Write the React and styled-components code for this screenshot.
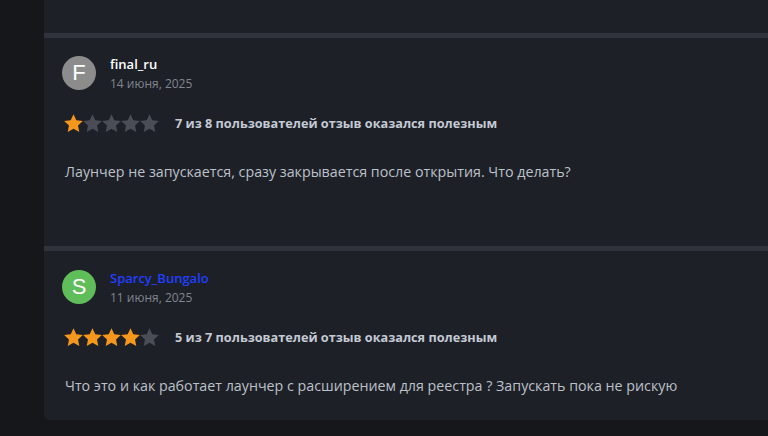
import React from 'react';
import styled, { createGlobalStyle } from 'styled-components';

const GlobalStyle = createGlobalStyle`
  html, body {
    margin: 0;
    padding: 0;
    background: #16171b;
    overflow: hidden;
  }
  body {
    font-family: "Open Sans", "Noto Sans", Arial, sans-serif;
  }
`;

const Page = styled.div`
  display: flex;
  height: 436px;
  padding-left: 44px;
  box-sizing: border-box;
`;

const Card = styled.div`
  flex: 1;
  margin-right: -20px;
  align-self: flex-start;
  background: #1e2027;
  border-radius: 0 0 6px 6px;
  padding-top: 33px;
  height: 420px;
  box-sizing: border-box;
`;

const Divider = styled.div`
  height: 5px;
  background: #30333c;
`;

const Review = styled.div`
  padding: ${p => p.$top}px 20px ${p => p.$bottom}px 18px;
`;

const Header = styled.div`
  display: flex;
  align-items: center;
  gap: 14px;
  height: 34px;
`;

const Avatar = styled.div`
  width: 34px;
  height: 34px;
  border-radius: 50%;
  background: ${p => p.$color};
  color: #fff;
  display: flex;
  align-items: center;
  justify-content: center;
  font-size: 22px;
  font-family: "Liberation Sans", Arial, sans-serif;
`;

const Meta = styled.div`
  display: flex;
  flex-direction: column;
  gap: 3px;
  margin-top: 1px;
`;

const Name = styled.span`
  font-size: 13px;
  font-weight: 600;
  line-height: 17px;
  color: ${p => p.$color};
`;

const Date = styled.span`
  font-size: 12px;
  line-height: 16px;
  color: #7f868f;
`;

const Rating = styled.div`
  display: flex;
  align-items: center;
  gap: 16px;
  margin-top: 23px;
  margin-left: 2px;
  height: 20px;
`;

const Stars = styled.div`
  display: flex;
`;

const Helpful = styled.span`
  font-size: 12.7px;
  font-weight: 700;
  color: #c3cad4;
`;

const Text = styled.p`
  margin: 29px 0 0 3px;
  font-size: 14.25px;
  line-height: 20px;
  color: #bcc1c9;
`;

const Star = ({ on }) => (
  <svg width="19" height="19" viewBox="1.5 1.5 21 21">
    <path
      d="M12 1.8l3.1 6.6 7.2.9-5.3 5 1.4 7.1L12 17.9l-6.4 3.5 1.4-7.1-5.3-5 7.2-.9z"
      fill={on ? '#f5971c' : '#4a4d56'}
    />
  </svg>
);

const reviews = [
  {
    letter: 'F',
    avatar: '#8c8c8c',
    name: 'final_ru',
    nameColor: '#ffffff',
    date: '14 июня, 2025',
    stars: 1,
    helpful: '7 из 8 пользователей отзыв оказался полезным',
    text: 'Лаунчер не запускается, сразу закрывается после открытия. Что делать?',
    top: 18,
    bottom: 64,
  },
  {
    letter: 'S',
    avatar: '#5fbd5a',
    name: 'Sparcy_Bungalo',
    nameColor: '#1f3fff',
    date: '11 июня, 2025',
    stars: 4,
    helpful: '5 из 7 пользователей отзыв оказался полезным',
    text: 'Что это и как работает лаунчер с расширением для реестра ? Запускать пока не рискую',
    top: 19,
    bottom: 24,
  },
];

export default function App() {
  return (
    <>
      <GlobalStyle />
      <Page>
        <Card>
          {reviews.map(r => (
            <React.Fragment key={r.name}>
              <Divider />
              <Review $top={r.top} $bottom={r.bottom}>
                <Header>
                  <Avatar $color={r.avatar}>{r.letter}</Avatar>
                  <Meta>
                    <Name $color={r.nameColor}>{r.name}</Name>
                    <Date>{r.date}</Date>
                  </Meta>
                </Header>
                <Rating>
                  <Stars>
                    {[0, 1, 2, 3, 4].map(i => <Star key={i} on={i < r.stars} />)}
                  </Stars>
                  <Helpful>{r.helpful}</Helpful>
                </Rating>
                <Text>{r.text}</Text>
              </Review>
            </React.Fragment>
          ))}
        </Card>
      </Page>
    </>
  );
}
